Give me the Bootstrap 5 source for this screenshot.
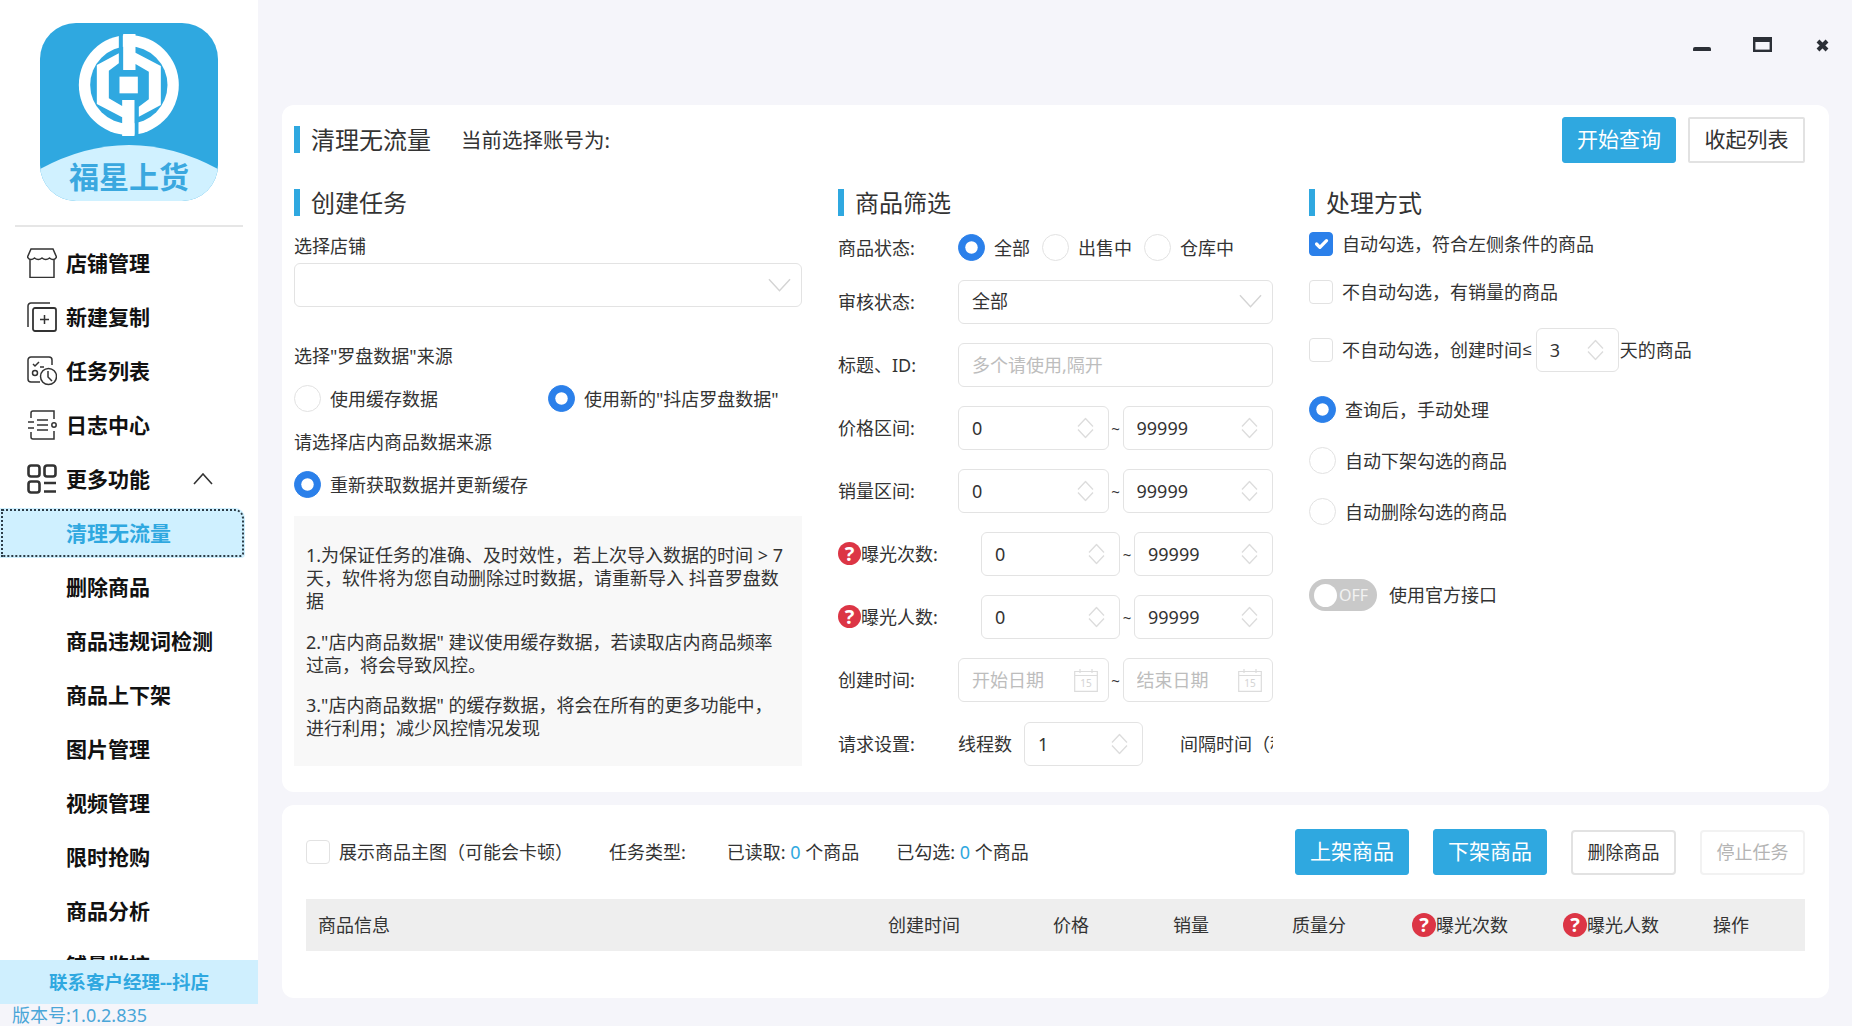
<!DOCTYPE html>
<html lang="zh-CN">
<head>
  <meta charset="UTF-8" />
  <meta name="viewport" content="width=device-width, initial-scale=1" />
  <title>福星上货</title>
  <link href="https://cdn.jsdelivr.net/npm/bootstrap@5.3.0/dist/css/bootstrap.min.css" rel="stylesheet" />
  <style>
    :root { --brand: #2fa8e0; --pick: #2b80ea; --line: #e3e3e3; }
    html, body { height: 100%; }
    body {
      background: #f5f5fa;
      color: #333;
      font-family: "Noto Sans", "Noto Sans CJK SC", sans-serif;
      font-size: 18px;
      line-height: 24px;
      overflow: hidden;
    }
    /* sidebar */
    .sidebar { width: 258px; height: 100vh; flex: none; }
    .side-white { background: #fff; flex: 1 1 0; min-height: 0; overflow: hidden; }
    .logo { display: block; margin: 23px 0 0 40px; }
    .side-rule { height: 2px; background: #e6e6e6; margin: 24px 15px 9px; }
    .side-nav .nav-link {
      height: 54px; padding: 0 0 0 66px; color: #111; font-size: 21px; font-weight: 700;
      display: flex; align-items: center;
    }
    .side-nav .nav-link.top { padding-left: 27px; }
    .side-nav .nav-link svg { width: 30px; height: 30px; margin-right: 9px; flex: none; fill: none; stroke: #333; stroke-width: 1.5; }
    .side-nav .nav-link svg.grid-icon { stroke-width: 2.6; }
    .side-nav .nav-link svg.chev { width: 20px; height: 12px; margin: 0 45px 0 auto; stroke-width: 1.6; }
    .side-nav .nav-link.active {
      width: 245px; height: 50px; margin: 2px 0; color: var(--brand);
      background: #cff0ff; border-radius: 0 10px 4px 0;
      outline: 2px dotted #2d3d48; outline-offset: -3px;
    }
    .side-foot { height: 44px; flex: none; background: #cfeffe; color: var(--brand); font-size: 18.5px; font-weight: 700; }
    .side-ver { height: 22px; flex: none; padding-left: 12px; color: #4aa6d8; line-height: 22px; white-space: nowrap; }

    /* main */
    .main { padding: 0 23px 0 24px; min-width: 0; }
    .win-bar { height: 105px; padding-top: 37px; gap: 42px; }
    .win-close { margin: 2px 0 0 2px; }
    .panel { border-radius: 12px; border: 0; }
    .panel-top { height: 687px; padding: 12px 24px 0 12px; }
    .panel-bottom { height: 193px; margin-top: 13px; padding: 24px 24px 0 24px; }
    .head-bar { height: 45px; }
    .sec-title {
      border-left: 6px solid var(--brand); padding-left: 11px; height: 27px;
      font-size: 24px; line-height: 27px; color: #333; font-weight: 400; margin: 0; white-space: nowrap;
    }
    .account { margin-left: 30px; font-size: 20.5px; }
    .btn-big { width: 114px; height: 46px; padding: 0; font-size: 21px; border-radius: 3px; }
    .btn-small { width: 105px; height: 45px; padding: 0; font-size: 18px; border-radius: 4px; }
    .btn-brand { background: var(--brand); border: 1px solid var(--brand); color: #fff; }
    .btn-line { background: #fff; border: 2px solid #e2e2e2; color: #333; }
    .btn-off { background: #fff; border: 2px solid #f2f2f2; color: #b4b4b4; }
    .btn-fold { width: 117px; margin-left: 12px; border-radius: 2px; }
    .tool-btn { margin-left: 24px; }
    .cols { gap: 36px; margin-top: 27px; }
    .col-create { width: 508px; flex: none; }
    .col-filter { width: 435px; flex: none; }
    .form-label-line { height: 24px; margin: 18px 0 0; white-space: nowrap; }
    .form-label-line.far { margin-top: 37px; }
    .form-control, .form-select {
      height: 44px; padding: 0 13px; font-size: 18px; color: #333;
      border: 1.5px solid var(--line); border-radius: 6px; box-shadow: none;
    }
    .form-control::placeholder { color: #bdbdbd; }
    .form-select {
      background-image: url("data:image/svg+xml,%3Csvg xmlns='http://www.w3.org/2000/svg' viewBox='0 0 24 15'%3E%3Cpath d='M1 1l11 12L23 1' fill='none' stroke='%23d4d4d4' stroke-width='1.5'/%3E%3C/svg%3E");
      background-size: 23px 15px; background-position: right 10px center;
    }
    .form-check-input { margin: 0; flex: none; border: 1.5px solid #e2e2e2; }
    .form-check-input:checked { background-color: var(--pick); border-color: var(--pick); }
    .radio-item, .check-item { display: flex; align-items: center; margin: 0; white-space: nowrap; }
    .radio-item .form-check-input { width: 27px; height: 27px; margin-right: 9px; }
    .check-item .form-check-input { width: 24px; height: 24px; margin-right: 9px; border-radius: 4px; }
    .source-row { margin-top: 17px; }
    .source-first { width: 254px; }
    .refresh-radio { margin-top: 17px; }
    .num { position: relative; flex: 1 1 0; min-width: 0; }
    .num .spin, .num .cal { position: absolute; top: 50%; transform: translateY(-50%); pointer-events: none; }
    .num .spin { right: 15px; width: 17px; height: 21px; fill: none; stroke: #dcdcdc; stroke-width: 1.3; }
    .num .cal { right: 11px; width: 24px; height: 24px; }
    .tilde { width: 14px; flex: none; text-align: center; font-size: 15px; }
    .status-row { margin-top: 18px; height: 27px; }
    .status-row .second { margin-left: 4px; }
    .status-row .third { margin-left: 12px; }
    .row-line { display: flex; align-items: center; height: 44px; margin-top: 19px; white-space: nowrap; }
    .row-line.first { margin-top: 18.5px; }
    .row-line.clip { overflow: hidden; margin-top: 20px; }
    .row-label { width: 120px; flex: none; }
    .row-label.wide { width: 143px; display: flex; align-items: center; }
    .help {
      display: inline-block; width: 23px; height: 23px; border-radius: 50%; background: #dc3545; color: #fff;
      font-size: 20px; line-height: 23px; font-weight: 700; text-align: center; flex: none; vertical-align: middle;
    }
    .thread-label { margin-right: 12px; }
    .thread-num { flex: 0 0 119px; }
    .gap-label { margin-left: 37px; }
    .mt-select { margin-top: 5px; }
    .tip-box { background: #f8f8f8; padding: 28px 12px 26px; height: 250px; margin-top: 18px; line-height: 23px; }
    .tip-box p { margin: 0 0 17.5px; }
    .day-row { margin-top: 24px; height: 44px; }
    .le { font-family: "Liberation Sans", sans-serif; font-size: 16px; margin-left: 1px; }
    .day-num { width: 83px; flex: none; margin: 0 1px 0 4px; }
    .deal-first { margin-top: 16px; }
    .deal-item { margin-top: 24px; }
    .switch { margin: 54px 0 0; padding: 0; min-height: 32px; position: relative; display: flex; align-items: center; }
    .switch .form-check-input {
      width: 68px; height: 32px; margin: 0; border: 0; background-color: #c9c9c9; border-radius: 16px;
      background-image: url("data:image/svg+xml,%3Csvg xmlns='http://www.w3.org/2000/svg' viewBox='0 0 10 10'%3E%3Ccircle cx='5' cy='5' r='5' fill='%23fff'/%3E%3C/svg%3E");
      background-size: 23px 23px; background-position: 5px center;
    }
    .switch .off { position: absolute; left: 30px; top: 4px; color: #f2f2f2; font-size: 16px; pointer-events: none; }
    .switch label { margin-left: 12px; }
    .blue-num { color: var(--brand); }
    .tool-row { height: 46px; white-space: nowrap; }
    .type-label { margin-left: 36px; }
    .read-label { margin-left: 41px; }
    .pick-label { margin-left: 37px; }
    .goods-head { margin: 24px 0 0; table-layout: fixed; width: 100%; --bs-table-bg: #eee; }
    .goods-head th {
      height: 52px; padding: 0 0 0 12px; font-weight: 400; vertical-align: middle; border: 0; color: #333; white-space: nowrap;
    }
    .goods-head th:nth-child(1) { width: 570px; }
    .goods-head th:nth-child(2) { width: 165px; }
    .goods-head th:nth-child(3) { width: 120px; }
    .goods-head th:nth-child(4) { width: 119px; }
    .goods-head th:nth-child(5) { width: 120px; }
    .goods-head th:nth-child(6) { width: 151px; }
    .goods-head th:nth-child(7) { width: 150px; }
    .goods-head .help { width: 24px; height: 24px; line-height: 24px; margin-top: -3px; }
  </style>
</head>
<body class="d-flex">
  <aside class="sidebar d-flex flex-column">
    <div class="side-white">
      <svg class="logo" width="178" height="178" viewBox="0 0 178 178">
        <defs><clipPath id="logoClip"><rect width="178" height="178" rx="36" /></clipPath></defs>
        <g clip-path="url(#logoClip)">
          <rect width="178" height="178" fill="#2fa8e0" />
          <path d="M0 146Q89 98 178 146V178H0Z" fill="#d0f1ff" />
        </g>
        <g transform="translate(29.5 7) scale(.3333)">
          <circle cx="178" cy="165" r="150" fill="#fff" />
          <circle cx="178" cy="165" r="116" fill="#2fa8e0" />
          <rect x="148" y="10" width="12" height="45" fill="#2fa8e0" />
          <rect x="195" y="275" width="12" height="45" fill="#2fa8e0" />
          <path d="M82 105L148 70V100L118 122V205L158 228V210H195V318H158V262L82 222Z" fill="#fff" />
          <path d="M274 225L208 260V230L238 208V125L198 102V120H161V12H198V68L274 108Z" fill="#fff" />
          <rect x="150" y="140" width="55" height="50" fill="#fff" />
        </g>
        <text x="89" y="165" text-anchor="middle" font-size="30" font-weight="700" fill="#3aa8df" font-family="'Noto Sans CJK SC', sans-serif">福星上货</text>
      </svg>
      <div class="side-rule"></div>
      <nav class="nav flex-column side-nav">
        <a class="nav-link top" href="#">
          <svg viewBox="0 0 30 30"><path d="M4 1H26L29.5 9C28 12 25 12 22.5 10C20 12 17.5 12 15 10C12.5 12 10 12 7.5 10C5 12 2 12 .5 9Z" /><path d="M3 11V29.5H27V11" /></svg>
          店铺管理
        </a>
        <a class="nav-link top" href="#">
          <svg viewBox="0 0 30 30"><path d="M1 25V4A3 3 0 0 1 4 1H23" /><rect x="6" y="6" width="23" height="23" rx="2" stroke-width="1.8" /><path d="M17.500 13V22M13 17.500H22" /></svg>
          新建复制
        </a>
        <a class="nav-link top" href="#">
          <svg viewBox="0 0 30 30"><path d="M13 26H4A3 3 0 0 1 1 23V4A3 3 0 0 1 4 1H22A3 3 0 0 1 25 4V9" /><path d="M6 8L8 10L12 6M13 11H17" /><circle cx="8" cy="17" r="2.500" /><circle cx="21.500" cy="20.500" r="8" /><path d="M21 15V21L25 25" /></svg>
          任务列表
        </a>
        <a class="nav-link top" href="#">
          <svg viewBox="0 0 30 30"><path d="M4 8V3A2 2 0 0 1 6 1H27V9M4 22V27A2 2 0 0 0 6 29H27V21" /><path d="M1 12H7M1 18H7M10 10H21M10 15H21M10 20H21" /><circle cx="27" cy="15" r="2.200" /></svg>
          日志中心
        </a>
        <a class="nav-link top" href="#">
          <svg class="grid-icon" viewBox="0 0 30 30"><rect x="1.500" y="1.500" width="11" height="11" rx="2.500" /><rect x="17.500" y="1.500" width="11" height="11" rx="2.500" /><rect x="1.500" y="17.500" width="11" height="11" rx="2.500" /><path d="M17 19H29M17 27.500H29" /></svg>
          更多功能
          <svg class="chev" viewBox="0 0 20 12"><path d="M1 11L10 1L19 11" /></svg>
        </a>
        <a class="nav-link active" href="#">清理无流量</a>
        <a class="nav-link" href="#">删除商品</a>
        <a class="nav-link" href="#">商品违规词检测</a>
        <a class="nav-link" href="#">商品上下架</a>
        <a class="nav-link" href="#">图片管理</a>
        <a class="nav-link" href="#">视频管理</a>
        <a class="nav-link" href="#">限时抢购</a>
        <a class="nav-link" href="#">商品分析</a>
        <a class="nav-link" href="#">铺量监控</a>
      </nav>
    </div>
    <div class="side-foot d-flex align-items-center justify-content-center">联系客户经理--抖店</div>
    <div class="side-ver">版本号:1.0.2.835</div>
  </aside>

  <main class="main flex-grow-1 d-flex flex-column">
    <div class="win-bar d-flex justify-content-end align-items-start">
      <svg width="18" height="14" viewBox="0 0 18 14"><rect y="10" width="18" height="5" rx="2" fill="#2b2f36" /></svg>
      <svg width="19" height="15" viewBox="0 0 19 15"><rect x="1.200" y="1.200" width="16.600" height="12.600" fill="none" stroke="#2b2f36" stroke-width="2.400" /><rect x="1" y="1" width="17" height="4" fill="#2b2f36" /></svg>
      <svg class="win-close" width="13" height="13" viewBox="0 0 13 13"><path d="M2 2L11 11M11 2L2 11" stroke="#2b2f36" stroke-width="4" /></svg>
    </div>

    <section class="card panel panel-top">
      <div class="head-bar d-flex align-items-center">
        <h2 class="sec-title">清理无流量</h2>
        <span class="account">当前选择账号为:</span>
        <button class="btn btn-big btn-brand ms-auto" type="button">开始查询</button>
        <button class="btn btn-big btn-line btn-fold" type="button">收起列表</button>
      </div>

      <div class="cols d-flex">
        <div class="col-create">
          <h3 class="sec-title">创建任务</h3>
          <p class="form-label-line">选择店铺</p>
          <select class="form-select mt-select" aria-label="选择店铺"><option></option></select>
          <p class="form-label-line far">选择"罗盘数据"来源</p>
          <div class="d-flex source-row">
            <label class="radio-item source-first"><input class="form-check-input" type="radio" name="cache" />使用缓存数据</label>
            <label class="radio-item"><input class="form-check-input" type="radio" name="cache" checked />使用新的"抖店罗盘数据"</label>
          </div>
          <p class="form-label-line">请选择店内商品数据来源</p>
          <label class="radio-item refresh-radio"><input class="form-check-input" type="radio" checked />重新获取数据并更新缓存</label>
          <div class="tip-box">
            <p>1.为保证任务的准确、及时效性，若上次导入数据的时间 &gt; 7天，软件将为您自动删除过时数据，请重新导入 抖音罗盘数据</p>
            <p>2."店内商品数据" 建议使用缓存数据，若读取店内商品频率过高，将会导致风控。</p>
            <p class="mb-0">3."店内商品数据" 的缓存数据，将会在所有的更多功能中，进行利用；减少风控情况发现</p>
          </div>
        </div>

        <div class="col-filter">
          <h3 class="sec-title">商品筛选</h3>
          <div class="d-flex align-items-center status-row">
            <span class="row-label">商品状态:</span>
            <label class="radio-item me-2"><input class="form-check-input" type="radio" name="st" checked />全部</label>
            <label class="radio-item second"><input class="form-check-input" type="radio" name="st" />出售中</label>
            <label class="radio-item third"><input class="form-check-input" type="radio" name="st" />仓库中</label>
          </div>
          <div class="row-line first">
            <span class="row-label">审核状态:</span>
            <select class="form-select" aria-label="审核状态"><option>全部</option></select>
          </div>
          <div class="row-line">
            <span class="row-label">标题、ID:</span>
            <input class="form-control" type="text" placeholder="多个请使用,隔开" />
          </div>
          <div class="row-line">
            <span class="row-label">价格区间:</span>
            <div class="num"><input class="form-control" type="text" value="0" /><svg class="spin" viewBox="0 0 17 21"><path d="M1 9L8.500 1L16 9M1 12L8.500 20L16 12" /></svg></div>
            <span class="tilde">~</span>
            <div class="num"><input class="form-control" type="text" value="99999" /><svg class="spin" viewBox="0 0 17 21"><path d="M1 9L8.500 1L16 9M1 12L8.500 20L16 12" /></svg></div>
          </div>
          <div class="row-line">
            <span class="row-label">销量区间:</span>
            <div class="num"><input class="form-control" type="text" value="0" /><svg class="spin" viewBox="0 0 17 21"><path d="M1 9L8.500 1L16 9M1 12L8.500 20L16 12" /></svg></div>
            <span class="tilde">~</span>
            <div class="num"><input class="form-control" type="text" value="99999" /><svg class="spin" viewBox="0 0 17 21"><path d="M1 9L8.500 1L16 9M1 12L8.500 20L16 12" /></svg></div>
          </div>
          <div class="row-line">
            <span class="row-label wide"><span class="help">?</span>曝光次数:</span>
            <div class="num"><input class="form-control" type="text" value="0" /><svg class="spin" viewBox="0 0 17 21"><path d="M1 9L8.500 1L16 9M1 12L8.500 20L16 12" /></svg></div>
            <span class="tilde">~</span>
            <div class="num"><input class="form-control" type="text" value="99999" /><svg class="spin" viewBox="0 0 17 21"><path d="M1 9L8.500 1L16 9M1 12L8.500 20L16 12" /></svg></div>
          </div>
          <div class="row-line">
            <span class="row-label wide"><span class="help">?</span>曝光人数:</span>
            <div class="num"><input class="form-control" type="text" value="0" /><svg class="spin" viewBox="0 0 17 21"><path d="M1 9L8.500 1L16 9M1 12L8.500 20L16 12" /></svg></div>
            <span class="tilde">~</span>
            <div class="num"><input class="form-control" type="text" value="99999" /><svg class="spin" viewBox="0 0 17 21"><path d="M1 9L8.500 1L16 9M1 12L8.500 20L16 12" /></svg></div>
          </div>
          <div class="row-line">
            <span class="row-label">创建时间:</span>
            <div class="num"><input class="form-control" type="text" placeholder="开始日期" /><svg class="cal" viewBox="0 0 24 24"><path d="M.7 3.500H23.300V23.300H.7ZM.7 7.500H23.300M6 1V5M18 1V5" fill="none" stroke="#dcdcdc" stroke-width="1.200" /><text x="12" y="19" font-size="10" text-anchor="middle" fill="#d4d4d4">15</text></svg></div>
            <span class="tilde">~</span>
            <div class="num"><input class="form-control" type="text" placeholder="结束日期" /><svg class="cal" viewBox="0 0 24 24"><path d="M.7 3.500H23.300V23.300H.7ZM.7 7.500H23.300M6 1V5M18 1V5" fill="none" stroke="#dcdcdc" stroke-width="1.200" /><text x="12" y="19" font-size="10" text-anchor="middle" fill="#d4d4d4">15</text></svg></div>
          </div>
          <div class="row-line clip">
            <span class="row-label">请求设置:</span>
            <span class="thread-label">线程数</span>
            <div class="num thread-num"><input class="form-control" type="text" value="1" /><svg class="spin" viewBox="0 0 17 21"><path d="M1 9L8.500 1L16 9M1 12L8.500 20L16 12" /></svg></div>
            <span class="gap-label">间隔时间（秒）</span>
          </div>
        </div>

        <div class="flex-grow-1">
          <h3 class="sec-title">处理方式</h3>
          <label class="check-item deal-first"><input class="form-check-input" type="checkbox" checked />自动勾选，符合左侧条件的商品</label>
          <label class="check-item deal-item"><input class="form-check-input" type="checkbox" />不自动勾选，有销量的商品</label>
          <div class="d-flex align-items-center day-row">
            <label class="check-item"><input class="form-check-input" type="checkbox" />不自动勾选，创建时间<span class="le">≤</span></label>
            <div class="num day-num"><input class="form-control" type="text" value="3" /><svg class="spin" viewBox="0 0 17 21"><path d="M1 9L8.500 1L16 9M1 12L8.500 20L16 12" /></svg></div>
            <span class="text-nowrap">天的商品</span>
          </div>
          <label class="radio-item deal-item"><input class="form-check-input" type="radio" name="deal" checked />查询后，手动处理</label>
          <label class="radio-item deal-item"><input class="form-check-input" type="radio" name="deal" />自动下架勾选的商品</label>
          <label class="radio-item deal-item"><input class="form-check-input" type="radio" name="deal" />自动删除勾选的商品</label>
          <div class="form-check form-switch switch">
            <input class="form-check-input" type="checkbox" role="switch" id="officialApi" />
            <span class="off">OFF</span>
            <label for="officialApi">使用官方接口</label>
          </div>
        </div>
      </div>
    </section>

    <section class="card panel panel-bottom">
      <div class="tool-row d-flex align-items-center">
        <label class="check-item"><input class="form-check-input" type="checkbox" />展示商品主图（可能会卡顿）</label>
        <span class="type-label">任务类型:</span>
        <span class="read-label">已读取: <span class="blue-num">0</span> 个商品</span>
        <span class="pick-label">已勾选: <span class="blue-num">0</span> 个商品</span>
        <button class="btn btn-big btn-brand ms-auto" type="button">上架商品</button>
        <button class="btn btn-big btn-brand tool-btn" type="button">下架商品</button>
        <button class="btn btn-small btn-line tool-btn" type="button">删除商品</button>
        <button class="btn btn-small btn-off tool-btn" type="button">停止任务</button>
      </div>
      <table class="table goods-head">
        <thead>
          <tr>
            <th>商品信息</th>
            <th>创建时间</th>
            <th>价格</th>
            <th>销量</th>
            <th>质量分</th>
            <th><span class="help">?</span>曝光次数</th>
            <th><span class="help">?</span>曝光人数</th>
            <th>操作</th>
          </tr>
        </thead>
      </table>
    </section>
  </main>

  <script src="https://cdn.jsdelivr.net/npm/bootstrap@5.3.0/dist/js/bootstrap.bundle.min.js"></script>
</body>
</html>
